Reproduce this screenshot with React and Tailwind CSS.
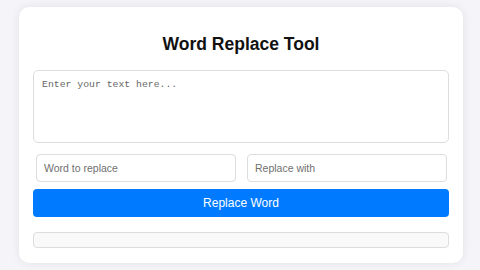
import React from "react";

export default function App() {
  return (
    <div className="w-[480px] h-[270px] bg-[#f4f4f9] pt-[7px] px-[19px] overflow-hidden [font-family:'Liberation_Sans',Arial,sans-serif]">
      <div className="w-[444px] h-[256px] bg-white rounded-[10px] shadow-[0_0_10px_rgba(0,0,0,0.08)] px-[14px] pt-[26px] flex flex-col">
        <h1 className="text-[17.5px] leading-[22px] font-bold text-[#111] text-center">Word Replace Tool</h1>
        <textarea
          className="mt-[15px] h-[73px] w-full resize-none border border-[#ddd] rounded-[5px] px-[8px] py-[8px] text-[9.8px] leading-[12px] outline-none placeholder:text-[#666] [font-family:'Liberation_Mono',monospace]"
          placeholder="Enter your text here..."
        />
        <div className="mt-[11px] flex gap-[11px] pl-[3px] pr-[2px]">
          <input
            className="flex-1 min-w-0 h-[28px] border border-[#ddd] rounded-[4px] px-[7px] text-[10.5px] outline-none placeholder:text-[#6f6f6f]"
            placeholder="Word to replace"
          />
          <input
            className="flex-1 min-w-0 h-[28px] border border-[#ddd] rounded-[4px] px-[7px] text-[10.5px] outline-none placeholder:text-[#6f6f6f]"
            placeholder="Replace with"
          />
        </div>
        <button className="mt-[7px] h-[28px] w-full bg-[#007bff] text-white text-[12px] rounded-[4px]">
          Replace Word
        </button>
        <div className="mt-[15px] h-[16px] w-full bg-[#f9f9f9] border border-[#ddd] rounded-[4px]" />
      </div>
    </div>
  );
}
